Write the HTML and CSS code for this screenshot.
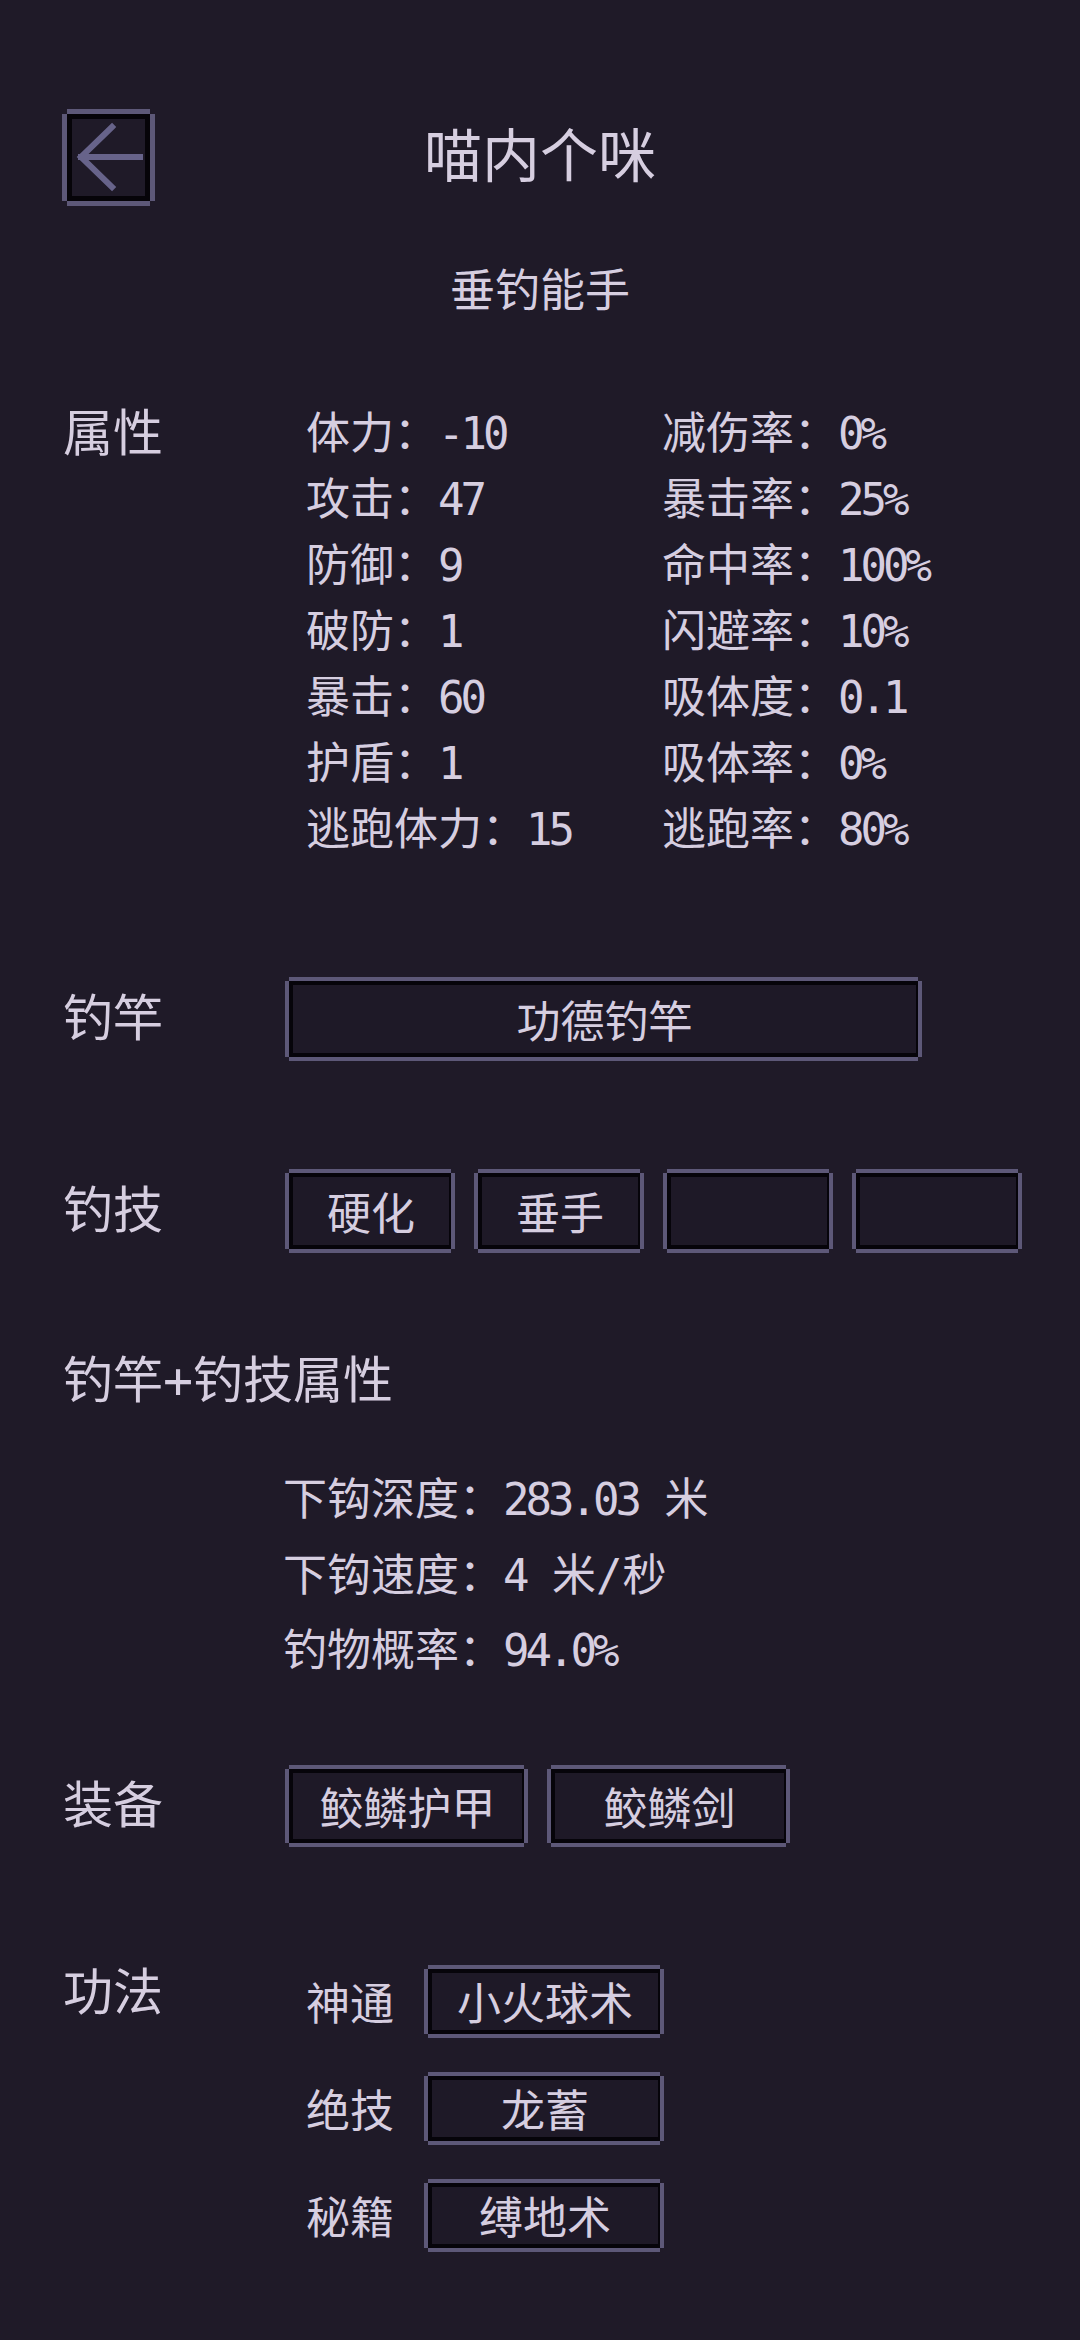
FILE: index.html
```html
<!DOCTYPE html>
<html lang="zh-CN">
<head>
    <meta charset="UTF-8">
    <meta name="viewport" content="width=device-width, initial-scale=1.0">
    <title>喵内个咪</title>
    <link rel="stylesheet" href="styles.css">
</head>
<body>

    <!-- Header -->
    <div class="header">
        <div class="back">
            <svg width="73" height="77" viewBox="0 0 73 77">
                <path d="M9 38 H68 M40 8 L9 38 L40 68" fill="none" stroke="#67638a" stroke-width="6" stroke-linecap="square"/>
            </svg>
        </div>
        <div class="title">喵内个咪</div>
        <div></div>
    </div>

    <div class="subtitle">垂钓能手</div>

    <!-- Attributes -->
    <div class="section attrs">
        <div class="label">属性</div>
        <div class="stats">
            <div>体力：<span class="val">-10</span></div><div>减伤率：<span class="val">0%</span></div>
            <div>攻击：<span class="val">47</span></div><div>暴击率：<span class="val">25%</span></div>
            <div>防御：<span class="val">9</span></div><div>命中率：<span class="val">100%</span></div>
            <div>破防：<span class="val">1</span></div><div>闪避率：<span class="val">10%</span></div>
            <div>暴击：<span class="val">60</span></div><div>吸体度：<span class="val">0.1</span></div>
            <div>护盾：<span class="val">1</span></div><div>吸体率：<span class="val">0%</span></div>
            <div>逃跑体力：<span class="val">15</span></div><div>逃跑率：<span class="val">80%</span></div>
        </div>
    </div>

    <!-- Rod -->
    <div class="section rod">
        <div class="label">钓竿</div>
        <div class="slot slot-rod">功德钓竿</div>
    </div>

    <!-- Skills -->
    <div class="section skills">
        <div class="label">钓技</div>
        <div class="slots">
            <div class="slot slot-skill">硬化</div>
            <div class="slot slot-skill">垂手</div>
            <div class="slot slot-skill"></div>
            <div class="slot slot-skill"></div>
        </div>
    </div>

    <div class="heading">钓竿+钓技属性</div>
    <div class="rod-stats">
        <div>下钩深度：<span class="val">283.03</span> 米</div>
        <div>下钩速度：<span class="val">4</span> 米/秒</div>
        <div>钓物概率：<span class="val">94.0%</span></div>
    </div>

    <!-- Equipment -->
    <div class="section equip">
        <div class="label">装备</div>
        <div class="slots">
            <div class="slot slot-equip">鲛鳞护甲</div>
            <div class="slot slot-equip">鲛鳞剑</div>
        </div>
    </div>

    <!-- Arts -->
    <div class="section arts">
        <div class="label">功法</div>
        <div class="art-list">
            <div class="art-row">
                <div class="art-name">神通</div>
                <div class="slot slot-art">小火球术</div>
            </div>
            <div class="art-row">
                <div class="art-name">绝技</div>
                <div class="slot slot-art">龙蓄</div>
            </div>
            <div class="art-row">
                <div class="art-name">秘籍</div>
                <div class="slot slot-art">缚地术</div>
            </div>
        </div>
    </div>

</body>
</html>
```

FILE: styles.css
```css
body {
    margin: 0;
    background-color: #1f1a28;
    color: #d6cee0;
    font-family: "DejaVu Sans Mono", "Noto Sans CJK SC", monospace;
    min-height: 2340px;
}

.header {
    display: grid;
    grid-template-columns: 1fr auto 1fr;
    align-items: center;
    padding: 0 67px;
    margin-top: 114px;
}

.back {
    width: 83px;
    height: 87px;
    box-sizing: border-box;
    border: 5px solid #060409;
    background-color: #1f1a28;
    box-shadow: 0 -5px 0 #5d5878, 0 5px 0 #5d5878, -5px 0 0 #5d5878, 5px 0 0 #5d5878;
}

.back svg {
    display: block;
}

.title {
    font-size: 58px;
    line-height: 87px;
}

.subtitle {
    text-align: center;
    font-size: 45px;
    line-height: 60px;
    margin-top: 61px;
}

.section {
    display: flex;
    align-items: center;
    padding-left: 63px;
}

.label {
    width: 222px;
    flex-shrink: 0;
    font-size: 50px;
    line-height: 66px;
}

.attrs {
    margin-top: 79px;
    align-items: flex-start;
}

.stats {
    display: grid;
    grid-template-columns: 356px auto;
    padding-left: 21px;
    font-size: 44px;
    line-height: 66px;
}

/* narrow the mono digits a little, the game font is slimmer */
.val {
    letter-spacing: -4px;
}

.slot {
    box-sizing: border-box;
    margin: 4px;
    height: 76px;
    border-style: solid;
    border-color: #06040a;
    border-width: 4px 2px 4px 4px;
    background-color: #1e1927;
    box-shadow: 0 -4px 0 #5d5878, 0 4px 0 #5d5878, -4px 0 0 #5d5878, 4px 0 0 #5d5878;
    display: flex;
    align-items: center;
    justify-content: center;
    font-size: 44px;
}

.slots {
    display: flex;
    gap: 19px;
}

.rod {
    margin-top: 114px;
}

.slot-rod {
    width: 629px;
}

.skills {
    margin-top: 108px;
}

.slot-skill {
    width: 162px;
}

.heading {
    padding-left: 63px;
    font-size: 50px;
    line-height: 60px;
    margin-top: 98px;
}

.rod-stats {
    padding-left: 283px;
    font-size: 44px;
    line-height: 75.5px;
    margin-top: 51px;
}

.equip {
    margin-top: 76px;
}

.slot-equip {
    width: 235px;
    height: 74px;
}

.arts {
    margin-top: 113px;
    align-items: flex-start;
}

.art-list {
    padding-left: 21px;
    padding-top: 5px;
}

.art-row {
    display: flex;
    align-items: center;
    margin-bottom: 34px;
}

.art-name {
    width: 88px;
    margin-right: 30px;
    font-size: 44px;
}

.slot-art {
    width: 232px;
    height: 65px;
}
```
